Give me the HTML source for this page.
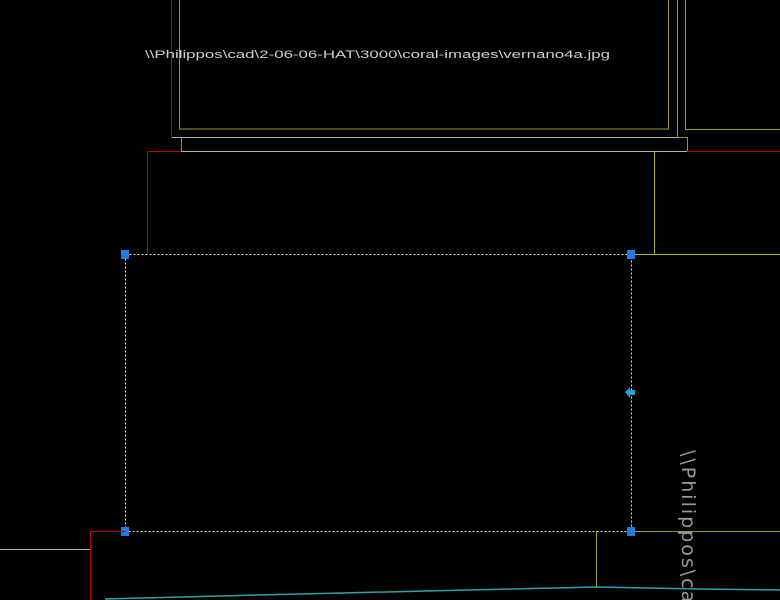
<!DOCTYPE html>
<html><head><style>
html,body{margin:0;padding:0;background:#000;width:780px;height:600px;overflow:hidden}
svg{display:block}
</style></head><body>
<svg width="780" height="600" xmlns="http://www.w3.org/2000/svg" shape-rendering="crispEdges">
<rect width="780" height="600" fill="#000"/>
<path d="M171.5 0V137.5H181" stroke="#c00000" fill="none"/>
<rect x="179.5" y="-1" width="489" height="130" stroke="#9a9a20" fill="none"/>
<path d="M677.5 0V137.5M685.5 0V129.5H780" stroke="#9a9a20" fill="none"/>
<path d="M172 137.5H677M181 151.5H687" stroke="#b0b0b0" fill="none"/>
<path d="M181.5 137V151.5M677 137.5H687.5V151.5" stroke="#9a9a20" fill="none"/>
<path d="M687 151.5H780" stroke="#c00000" fill="none"/>
<path d="M181 151.5H147.5V254" stroke="#c00000" fill="none"/>
<path d="M654.5 151V254.5M631 254.5H780" stroke="#b0b020" fill="none"/>
<text x="145" y="58" font-family="Liberation Sans, sans-serif" font-size="11" fill="#d0d0d0" textLength="465" lengthAdjust="spacingAndGlyphs">\\Philippos\cad\2-06-06-HAT\3000\coral-images\vernano4a.jpg</text>
<rect x="125.5" y="254.5" width="506" height="277" stroke="#ddd" stroke-dasharray="2,2" fill="none"/>
<g fill="#1e7be0">
<rect x="121" y="250" width="8" height="9"/><rect x="627" y="250" width="8" height="9"/>
<rect x="121" y="527" width="8" height="9"/><rect x="627" y="527" width="8" height="9"/>
</g>
<path d="M625 392L630 387V390H635V395H630V398Z" fill="#10a8e8"/>
<path d="M0 549.5H90" stroke="#b0b0b0"/>
<path d="M125 531.5H90.5V600" stroke="#c00000" fill="none"/>
<path d="M596.5 531V587M635 531.5H780" stroke="#9a9a20" fill="none"/>
<path d="M105 599L300 594L596 587L700 589L780 590" stroke="#30a0a8" stroke-width="1.5" fill="none" shape-rendering="auto"/>
<text transform="translate(682,450) rotate(90)" font-family="DejaVu Sans, sans-serif" font-size="19" font-weight="normal" letter-spacing="2" fill="#999">\\Philippos\cad</text>
</svg>
</body></html>
